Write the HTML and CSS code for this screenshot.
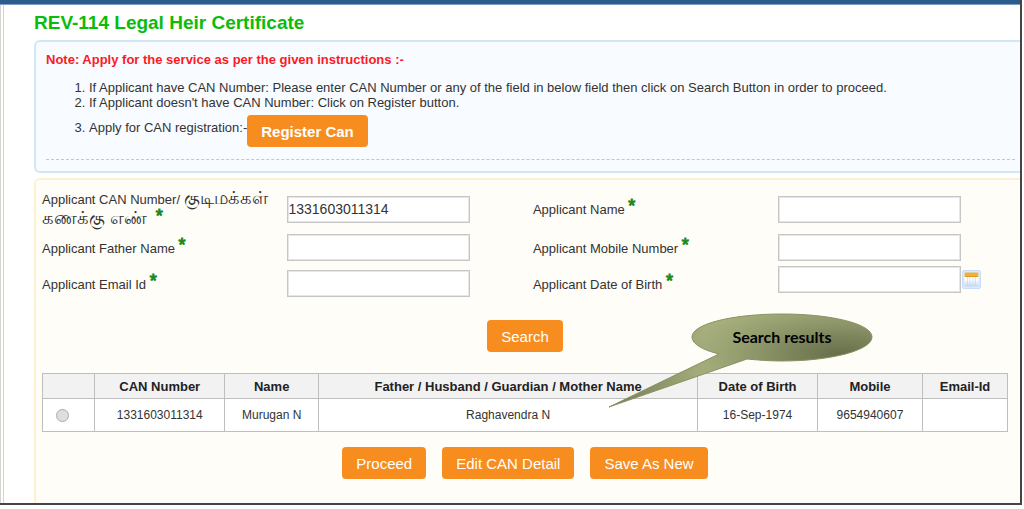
FILE: index.html
```html
<!DOCTYPE html>
<html lang="en">
<head>
    <meta charset="UTF-8">
    <meta name="viewport" content="width=device-width, initial-scale=1.0">
    <title>REV-114 Legal Heir Certificate</title>
    <link rel="stylesheet" href="styles.css">
</head>
<body>
    <div class="page">
        <div class="top-bar"></div>
        <main class="content">
            <h1>REV-114 Legal Heir Certificate</h1>

            <section class="panel note-panel">
                <h2>Note: Apply for the service as per the given instructions :-</h2>
                <ol>
                    <li>If Applicant have CAN Number: Please enter CAN Number or any of the field in below field then click on Search Button in order to proceed.</li>
                    <li>If Applicant doesn't have CAN Number: Click on Register button.</li>
                    <li class="register-item">Apply for CAN registration:-<button type="button" class="btn btn-bold">Register Can</button></li>
                </ol>
                <hr>
            </section>

            <section class="panel search-panel">
                <form>
                    <div class="fields">
                        <label class="tall" for="canNumber">Applicant CAN Number/ <span class="tamil" lang="ta">குடிமக்கள் கணக்கு எண்</span> <span class="star">*</span></label>
                        <input type="text" id="canNumber" value="1331603011314">
                        <label for="applicantName">Applicant Name <span class="star">*</span></label>
                        <input type="text" id="applicantName">

                        <label for="fatherName">Applicant Father Name <span class="star">*</span></label>
                        <input type="text" id="fatherName">
                        <label for="mobileNumber">Applicant Mobile Number <span class="star">*</span></label>
                        <input type="text" id="mobileNumber">

                        <label for="emailId">Applicant Email Id <span class="star">*</span></label>
                        <input type="text" id="emailId">
                        <label for="birthDate">Applicant Date of Birth <span class="star">*</span></label>
                        <div class="date-field">
                            <input type="text" id="birthDate">
                            <button type="button" class="calendar" aria-label="Pick a date">
                                <svg width="19" height="19" viewBox="0 0 19 19">
                                    <defs>
                                        <linearGradient id="days" x1="0" y1="0" x2="0" y2="1">
                                            <stop offset="0" stop-color="#ffffff"/>
                                            <stop offset="0.5" stop-color="#ffffff"/>
                                            <stop offset="1" stop-color="#c3d8f6"/>
                                        </linearGradient>
                                    </defs>
                                    <rect x="0.5" y="0.5" width="18" height="18" rx="1.5" fill="#dce9fb" stroke="#c9dcf8"/>
                                    <rect x="2.5" y="3" width="14" height="13.5" fill="url(#days)"/>
                                    <path d="M5.5 7v9M8 7v9M11 7v9M13.5 7v9" stroke="#c6d6ee" stroke-width="0.7"/>
                                    <rect x="2.5" y="2.5" width="14" height="4.5" rx="1" fill="#edb23c"/>
                                    <path d="M3 6.5h13" stroke="#dc9a22"/>
                                </svg>
                            </button>
                        </div>
                    </div>

                    <div class="actions search-action">
                        <button type="button" class="btn">Search</button>
                        <div class="callout">
                            <svg width="266" height="96" viewBox="0 0 266 96">
                                <defs>
                                    <linearGradient id="olive">
                                        <stop offset="0" stop-color="#737d55"/>
                                        <stop offset="0.18" stop-color="#8b9468"/>
                                        <stop offset="0.36" stop-color="#a5ae7c"/>
                                        <stop offset="1" stop-color="#a5ae7c"/>
                                    </linearGradient>
                                    <radialGradient id="shade" gradientUnits="userSpaceOnUse" cx="0" cy="0" r="1" gradientTransform="translate(232 42) scale(150 56)">
                                        <stop offset="0" stop-color="#666d49"/>
                                        <stop offset="0.35" stop-color="#737b55" stop-opacity="0.8"/>
                                        <stop offset="1" stop-color="#858d62" stop-opacity="0"/>
                                    </radialGradient>
                                </defs>
                                <path d="M1 94L111 41C95 37 84 31 84 24C84 11 124 1 174 1S264 11 264 24S224 48 174 48C161 48 150 47 139 46Z" fill="url(#olive)"/>
                                <path d="M1 94L111 41C95 37 84 31 84 24C84 11 124 1 174 1S264 11 264 24S224 48 174 48C161 48 150 47 139 46Z" fill="url(#shade)" stroke="#8a9263"/>
                            </svg>
                            <span>Search results</span>
                        </div>
                    </div>

                    <table>
                        <colgroup>
                            <col class="col-pick">
                            <col class="col-can">
                            <col class="col-name">
                            <col class="col-relative">
                            <col class="col-birth">
                            <col class="col-mobile">
                            <col class="col-email">
                        </colgroup>
                        <thead>
                            <tr>
                                <th></th>
                                <th>CAN Number</th>
                                <th>Name</th>
                                <th>Father / Husband / Guardian / Mother Name</th>
                                <th>Date of Birth</th>
                                <th>Mobile</th>
                                <th>Email-Id</th>
                            </tr>
                        </thead>
                        <tbody>
                            <tr>
                                <td class="pick"><input type="radio" name="applicant" aria-label="Select Murugan N"></td>
                                <td>1331603011314</td>
                                <td>Murugan N</td>
                                <td>Raghavendra N</td>
                                <td>16-Sep-1974</td>
                                <td>9654940607</td>
                                <td></td>
                            </tr>
                        </tbody>
                    </table>

                    <div class="actions result-actions">
                        <button type="button" class="btn">Proceed</button>
                        <button type="button" class="btn">Edit CAN Detail</button>
                        <button type="button" class="btn">Save As New</button>
                    </div>
                </form>
            </section>
        </main>
    </div>
</body>
</html>
```

FILE: styles.css
```css
* {
    margin: 0;
    padding: 0;
    box-sizing: border-box;
}

body {
    font-family: "Liberation Sans", Arial, sans-serif;
    font-size: 13px;
    line-height: 15px;
    color: #333;
    background: #fff;
    padding: 0 2px 4px 0;
}

.page {
    min-height: calc(100vh - 4px);
    display: flex;
    flex-direction: column;
    border-right: 2px solid #444;
    border-bottom: 2px solid #444;
    overflow: hidden;
}

.top-bar {
    height: 5px;
    background: #2b5c8d;
    border-bottom: 1px solid #7d9fc2;
}

.content {
    flex: 1;
    display: flex;
    flex-direction: column;
    gap: 5px;
    padding-left: 30px;
    border-left: 4px double #d5d5cd;
}

h1 {
    font-size: 19px;
    line-height: 22px;
    color: #0cbb0c;
    padding: 7px 0 1px;
}

.panel {
    border: 2px solid;
    border-right: none;
}

.note-panel {
    background: #f8fbff;
    border-color: #cfe8f3;
    border-radius: 6px 0 0 6px;
    padding: 10px 5px 11px 10px;
}

.note-panel h2 {
    font-size: 13px;
    line-height: 15px;
    color: #fb1a1f;
}

.note-panel ol {
    padding: 13px 0 0 43px;
}

.register-item .btn {
    margin-top: 5px;
    vertical-align: middle;
}

.note-panel hr {
    border: none;
    border-top: 1px dashed #c4c8ca;
    margin-top: 12px;
}

.search-panel {
    flex: 1;
    background: #fffdf8;
    border-color: #fff0cf;
    border-bottom: none;
    border-radius: 6px 0 0 0;
    padding: 9px 0 18px 6px;
}

.fields {
    display: grid;
    grid-template-columns: repeat(3, 25.1%) 1fr;
    align-items: center;
    row-gap: 5px;
}

.fields label {
    padding-right: 16px;
}

.fields label.tall {
    line-height: 19px;
}

.tamil {
    font-size: 18px;
}

.tamil + .star {
    margin-left: 5px;
}

.star {
    font-size: 18px;
    line-height: 10px;
    vertical-align: 2px;
    -webkit-text-stroke: 1px #1e8c1e;
    color: #1e8c1e;
}

input[type="text"] {
    width: 183px;
    height: 27px;
    border: 1px solid #c6c6c6;
    box-shadow: inset 0 0 0 1px #e6e6e6;
    background: #fff;
    font-family: inherit;
    font-size: 14px;
    color: #333;
}

.date-field {
    display: flex;
    align-items: center;
    gap: 1px;
    padding-bottom: 8px;
}

.calendar {
    border: none;
    background: none;
    line-height: 0;
    cursor: pointer;
}

.btn {
    height: 32px;
    padding: 0 14px;
    border: none;
    border-radius: 4px;
    background: #f78d1e;
    color: #fff;
    font-family: inherit;
    font-size: 15px;
    cursor: pointer;
}

.btn-bold {
    font-weight: bold;
}

.actions {
    display: flex;
    justify-content: center;
    gap: 16px;
    padding-right: 12px;
}

.search-action {
    position: relative;
    padding-top: 19px;
}

/* callout bubble lies over the results table */
.callout {
    position: absolute;
    top: 12px;
    left: calc(50% + 77px);
    width: 266px;
    height: 96px;
    pointer-events: none;
}

.callout svg {
    display: block;
}

.callout span {
    position: absolute;
    top: 15px;
    left: 84px;
    width: 180px;
    text-align: center;
    font-family: Lato, Calibri, sans-serif;
    font-size: 16px;
    line-height: 18px;
    font-weight: bold;
    color: #000;
}

table {
    width: calc(100% - 12px);
    margin-top: 21px;
    border-collapse: collapse;
    table-layout: fixed;
    text-align: center;
}

.col-pick { width: 5.4%; }
.col-can { width: 13.5%; }
.col-name { width: 9.7%; }
.col-relative { width: 39.3%; }
.col-birth { width: 12.4%; }
.col-mobile { width: 10.9%; }
.col-email { width: 8.8%; }

th,
td {
    border: 1px solid #bebebe;
}

th {
    height: 25px;
    background: #f2f2f2;
    font-size: 13px;
    color: #222;
}

td {
    height: 33px;
    background: #fff;
    font-size: 12px;
}

.pick {
    padding-right: 12px;
    line-height: 0;
}

.pick input {
    appearance: none;
    width: 13px;
    height: 13px;
    border: 1px solid #aaa;
    border-radius: 50%;
    background: #dedede;
}

.result-actions {
    padding-top: 15px;
}
```
